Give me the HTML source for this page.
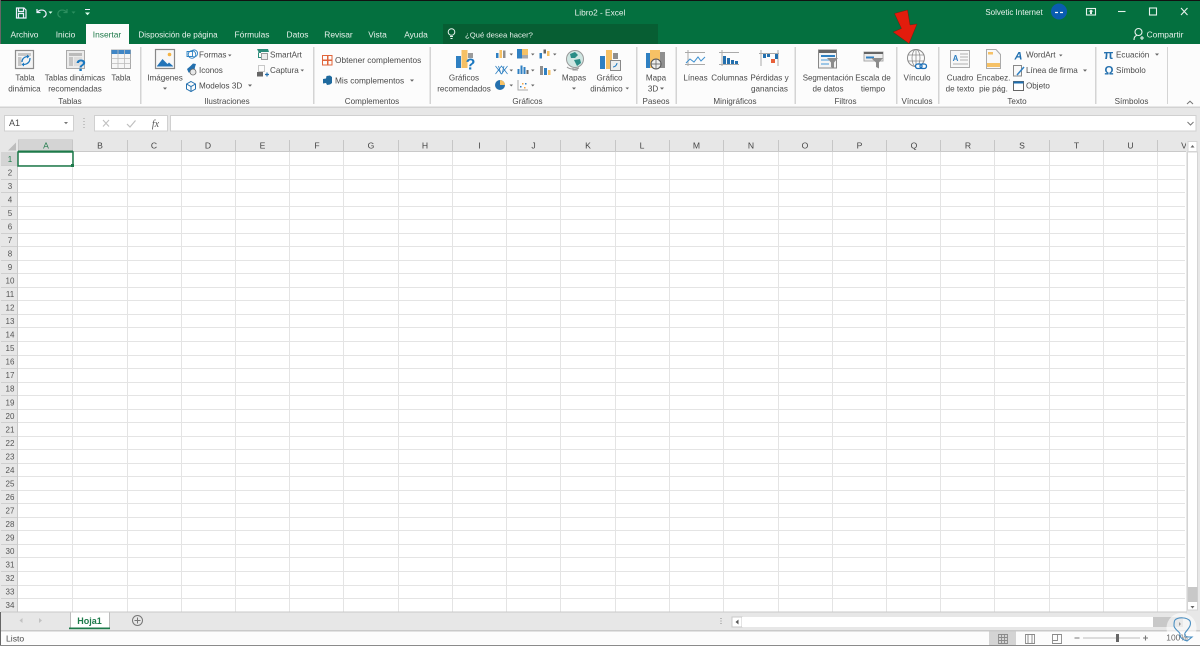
<!DOCTYPE html>
<html><head><meta charset="utf-8"><title>Libro2 - Excel</title>
<style>
html,body{margin:0;padding:0;background:#fff;width:1200px;height:646px;overflow:hidden}
svg{display:block}
text{font-family:"Liberation Sans",sans-serif;font-size:8.1px;fill:#4a4a4a;text-anchor:middle}
.l{text-anchor:start}
.w{fill:#e8f2ec}
.g{fill:#666}
.h{font-size:8.6px;fill:#444}
.r{font-size:8px;fill:#555}
</style></head><body>
<svg width="1200" height="646" viewBox="0 0 1200 646" xmlns="http://www.w3.org/2000/svg">
<!-- title bar -->
<rect width="1200" height="646" fill="#fff"/>
<rect width="1200" height="44" fill="#04703f"/>
<rect width="1200" height="1" fill="#111"/>
<rect y="0" width="1" height="646" fill="#666"/>
<rect x="443" y="24" width="215" height="20" fill="#075e33"/>
<rect x="86" y="24" width="43" height="20" fill="#fcfcfc"/>
<!-- QAT -->
<g fill="none" stroke="#eef" stroke-width="1.2">
<path d="M16.5 8h7.5l2 2v8h-9.500z"/><path d="M18.500 8v3.500h5V8M18.500 18v-4.500h5V18"/>
<path d="M37 9v3.500h3.500M37.300 12.300c2-3 7-3 8.500 0 1 2.500-.5 4.500-2.500 5"/>
<path stroke="#2c8f5f" d="M67 9v3.500h-3.500M66.700 12.300c-2-3-7-3-8.500 0-1 2.500.5 4.500 2.500 5"/>
<path stroke-width="1" d="M85 9.500h5"/>
</g>
<path d="M48.500 11.500h4l-2 2.200z" fill="#dfe"/><path d="M71.500 11.500h4l-2 2.200z" fill="#2c8f5f"/><path d="M85 12.500h5l-2.500 2.800z" fill="#dfe"/>
<text x="600" y="15.500" class="w" style="font-size:8.300px">Libro2  -  Excel</text>
<text x="1014" y="15" class="w" style="font-size:8px">Solvetic Internet</text>
<circle cx="1059" cy="11.500" r="8" fill="#0a5cb0"/>
<path d="M1055 12.500h3M1060 12.500h3" stroke="#fff" stroke-width="1.200"/>
<g fill="none" stroke="#e6f2ec" stroke-width="1.100">
<rect x="1086.500" y="8.500" width="9" height="6.500"/>
<path d="M1118 11.500h7.500"/>
<rect x="1149.500" y="8" width="7" height="7"/>
<path d="M1181 8l6.500 7M1187.500 8l-6.500 7"/>
<circle cx="1138.500" cy="32" r="3.500"/><path d="M1134 40c0-3 1.500-4.500 3-4.500M1140 38h4M1142 36v4"/>
</g>
<path d="M1088.500 11.500l2.500-2 2.500 2zM1090 11.500h2v2.500h-2z" fill="#e6f2ec"/>
<text x="1165" y="37.500" class="w" style="font-size:8.400px">Compartir</text>
<!-- tabs -->
<text x="24.500" y="37.500" class="w" style="font-size:8.400px">Archivo</text>
<text x="65.500" y="37.500" class="w" style="font-size:8.400px">Inicio</text>
<text x="107" y="37.500" style="fill:#1f7a4a;font-size:8.400px">Insertar</text>
<text x="178" y="37.500" class="w">Disposición de página</text>
<text x="252" y="37.500" class="w" style="font-size:8.400px">Fórmulas</text>
<text x="297.500" y="37.500" class="w" style="font-size:8.400px">Datos</text>
<text x="338.500" y="37.500" class="w" style="font-size:8.400px">Revisar</text>
<text x="377.500" y="37.500" class="w" style="font-size:8.400px">Vista</text>
<text x="416" y="37.500" class="w" style="font-size:8.400px">Ayuda</text>
<circle cx="451.500" cy="32" r="3.300" fill="none" stroke="#e6f2ec"/><path d="M450 36.500h3M450.500 38.500h2" stroke="#e6f2ec"/>
<text x="465" y="37.500" class="w l" style="font-size:7.700px">¿Qué desea hacer?</text>
<!-- red arrow -->
<path d="M894.500 13.500L907.500 10 910 25 917 24 909 43.500 893 32 901.500 28.500z" fill="#e21c0c" stroke="#7a1208" stroke-width=".4"/>
<!-- ribbon -->
<rect y="44" width="1200" height="63" fill="#fcfcfc"/>
<g fill="#d4d4d4">
<rect x="140" y="47" width="1.500" height="57"/><rect x="313" y="47" width="1.500" height="57"/><rect x="429.500" y="47" width="1.500" height="57"/>
<rect x="636" y="47" width="1.500" height="57"/><rect x="675.500" y="47" width="1.500" height="57"/><rect x="794.500" y="47" width="1.500" height="57"/>
<rect x="896" y="47" width="1.500" height="57"/><rect x="938" y="47" width="1.500" height="57"/><rect x="1095" y="47" width="1.500" height="57"/><rect x="1167" y="47" width="1" height="57"/>
</g>
<!-- ribbon labels -->
<text x="25" y="80.500">Tabla</text><text x="24.500" y="91.500">dinámica</text>
<text x="75" y="80.500" style="font-size:7.900px">Tablas dinámicas</text><text x="75" y="91.500">recomendadas</text>
<text x="121" y="80.500">Tabla</text>
<text x="70" y="104">Tablas</text>
<text x="165" y="80.500">Imágenes</text><path d="M163 87.500h4l-2 2.200z" fill="#666"/>
<text x="199" y="57.500" class="l">Formas</text><path d="M228 54.500h3.500l-1.700 2z" fill="#666"/>
<text x="199" y="73" class="l">Iconos</text>
<text x="199" y="88.500" class="l">Modelos 3D</text><path d="M248 84.500h4l-2 2.200z" fill="#666"/>
<text x="270" y="57.500" class="l">SmartArt</text>
<text x="270" y="73" class="l">Captura</text><path d="M300.500 69.500h3.500l-1.700 2z" fill="#666"/>
<text x="227" y="104">Ilustraciones</text>
<text x="335" y="63" class="l" style="font-size:8.300px">Obtener complementos</text>
<text x="335" y="83.500" class="l" style="font-size:8.300px">Mis complementos</text><path d="M410 79.500h4l-2 2.200z" fill="#666"/>
<text x="372" y="104">Complementos</text>
<text x="464" y="80.500">Gráficos</text><text x="464" y="91.500">recomendados</text>
<text x="527.500" y="104">Gráficos</text>
<text x="574" y="80.500">Mapas</text><path d="M572 87.500h4l-2 2.200z" fill="#666"/>
<text x="609.500" y="80.500">Gráfico</text><text x="606.500" y="91.500">dinámico</text><path d="M625.500 87.500h3.500l-1.700 2z" fill="#666"/>
<text x="656" y="80.500">Mapa</text><text x="653" y="91.500">3D</text><path d="M660 87.500h4l-2 2.200z" fill="#666"/>
<text x="656" y="104">Paseos</text>
<text x="695.500" y="80.500">Líneas</text>
<text x="729.500" y="80.500">Columnas</text>
<text x="769.500" y="80.500">Pérdidas y</text><text x="769.500" y="91.500">ganancias</text>
<text x="735" y="104">Minigráficos</text>
<text x="828" y="80.500" style="font-size:7.900px">Segmentación</text><text x="828" y="91.500">de datos</text>
<text x="873" y="80.500">Escala de</text><text x="873" y="91.500">tiempo</text>
<text x="845.500" y="104">Filtros</text>
<text x="917" y="80.500">Vínculo</text>
<text x="917" y="104">Vínculos</text>
<text x="960" y="80.500">Cuadro</text><text x="960" y="91.500">de texto</text>
<text x="993.500" y="80.500">Encabez.</text><text x="993.500" y="91.500">pie pág.</text>
<text x="1026" y="57.500" class="l">WordArt</text><path d="M1059 54.500h3.500l-1.700 2z" fill="#666"/>
<text x="1026" y="73" class="l">Línea de firma</text><path d="M1083 69.500h4l-2 2.200z" fill="#666"/>
<text x="1026" y="88.500" class="l">Objeto</text>
<text x="1017" y="104">Texto</text>
<text x="1116" y="57.500" class="l">Ecuación</text><path d="M1155 53.500h4l-2 2.200z" fill="#666"/>
<text x="1116" y="73" class="l">Símbolo</text>
<text x="1131.500" y="104">Símbolos</text>
<path d="M1187 104l3-2.800 3 2.800" fill="none" stroke="#777"/>
<!-- Tabla dinamica icon -->
<rect x="15.500" y="50.500" width="18" height="18" fill="#f4f4f4" stroke="#8c8c8c" stroke-width="1.200"/>
<rect x="18" y="53" width="13" height="3" fill="#c6c6c6"/><rect x="18" y="57" width="3.500" height="9" fill="#c6c6c6"/>
<path d="M30 58c0 4-2 6-6 6.500M22 62c0-3 2-5 5-5.500" fill="none" stroke="#1b78c0" stroke-width="1.200"/>
<path d="M24 62.500v4l-2.500-2zM27 54.500v4l2.500-2z" fill="#1b78c0"/>
<!-- Tablas recomendadas -->
<rect x="66.500" y="50.500" width="18" height="18" fill="#ececec" stroke="#aaa"/><rect x="69" y="53" width="13" height="3" fill="#bbb"/><rect x="69" y="57" width="4" height="9" fill="#c4c4c4"/><rect x="74" y="57" width="8" height="9" fill="#ddd"/>
<text x="81" y="71" style="font-size:17px;font-weight:bold;fill:#1b78c0">?</text>
<!-- Tabla icon -->
<rect x="111.500" y="50" width="19" height="18.500" fill="#f6f6f6" stroke="#aaa"/><rect x="111.500" y="50" width="19" height="4" fill="#3f86c6"/>
<path d="M111.500 58.500h19M111.500 63.500h19M118 54v14.500M124.500 54v14.500M118 50v4M124.500 50v4" stroke="#bbb" stroke-width=".8" fill="none"/>
<!-- Imagenes -->
<rect x="155.500" y="49.500" width="19" height="19" fill="#f7f7f7" stroke="#888" stroke-width="1.200"/>
<circle cx="169.500" cy="54.500" r="1.800" fill="#f5b342"/>
<path d="M157 66l5.500-7 5 5 1.500-1.500 4 3.500v.500h-16z" fill="#2374b8"/>
<!-- Formas -->
<path d="M187 51.500h5.500v5H187z M192.500 56.500a3.500 3.500 0 1 0-1-5.500" fill="none" stroke="#2f83c4" stroke-width=".9"/><circle cx="192" cy="54.500" r="3.800" fill="none" stroke="#2f83c4" stroke-width=".9"/>
<!-- Iconos -->
<path d="M187 69l3-2.500 3-3 3 .500-1 3-.500 3-3 2.500h-3z" fill="#2470ae"/><circle cx="193" cy="72" r="3" fill="#e8e8e8" stroke="#666" stroke-width=".8"/>
<!-- Modelos -->
<path d="M191 81.500l4.500 2.500v5l-4.500 2.500-4.500-2.500v-5zM186.500 84l4.500 2.500 4.500-2.500M191 86.500v5" fill="none" stroke="#2470ae" stroke-width="1"/>
<!-- SmartArt -->
<path d="M257 49h11l1 3h-8v1h-2z" fill="#2c8c7a"/><rect x="261.500" y="53.500" width="6" height="6" fill="#eee" stroke="#888" stroke-width=".8"/><path d="M258.500 52.500v5h2.500" fill="none" stroke="#2c8c7a"/>
<!-- Captura -->
<rect x="258.500" y="65.500" width="6" height="6" fill="none" stroke="#bbb" stroke-width=".8"/><rect x="257" y="72" width="6" height="4.500" fill="#666"/><path d="M265 74.500h4M267 72.500v4" stroke="#2470ae" stroke-width="1.200"/>
<!-- Obtener -->
<g fill="none" stroke="#e0653a" stroke-width="1"><rect x="322.500" y="55.500" width="5" height="4.500"/><rect x="322.500" y="60.500" width="5" height="4.500"/><rect x="328" y="60.500" width="4" height="4.500"/><rect x="328" y="55.500" width="4" height="4.500"/></g>
<!-- Mis compl -->
<path d="M323 79l3-.5.500-2.500 3.500-.500 2 1.500v6l-2 1.500-3 .500-1-2-3 .500z" fill="#1f6a9e"/>
<!-- Graficos recomendados -->
<rect x="456" y="56" width="5" height="12" fill="#2f80c2"/><rect x="461.500" y="50" width="6" height="18" fill="#f6c165"/><rect x="468" y="53" width="5" height="5" fill="#9a9a9a"/>
<text x="470.500" y="69.500" style="font-size:16px;font-weight:bold;fill:#1b78c0">?</text>
<!-- mini charts -->
<g fill="#2f80c2">
<rect x="496" y="53" width="2.500" height="5"/><rect x="503" y="50.500" width="2.500" height="7.500" fill="#8f8f8f"/><rect x="499.500" y="50" width="2.500" height="8" fill="#f6c165"/>
<rect x="517" y="49" width="5" height="9.500"/><rect x="522" y="49" width="6" height="6" fill="#f6c165"/><rect x="522" y="55" width="6" height="3.500" fill="#aaa"/>
<rect x="539.500" y="53" width="2.500" height="5.500"/><rect x="543.500" y="49.500" width="2.500" height="4" fill="#666"/><rect x="547" y="51" width="2.500" height="5" fill="#f6c165"/>
<rect x="517.500" y="69" width="2" height="5"/><rect x="520.500" y="65.500" width="2" height="8.500"/><rect x="523.500" y="67" width="2" height="7"/><rect x="526.500" y="70" width="2" height="4" fill="#666"/>
<rect x="540" y="66" width="3" height="9" fill="#8f8f8f"/><rect x="544" y="68" width="3" height="7"/><rect x="548" y="70" width="2.500" height="5" fill="#f6c165"/>
</g>
<path d="M495.500 66l6 8 6-8M495.500 74l6-8 6 8M498.500 66l2.500 8M504 66l-2 8" fill="none" stroke="#2f80c2" stroke-width=".8"/>
<circle cx="500" cy="85" r="5" fill="#2470ae"/><path d="M500 85v-5a5 5 0 0 1 5 5z" fill="#f6c165"/>
<path d="M518 80v10h10" fill="none" stroke="#aaa"/><g fill="#2f80c2"><rect x="520" y="86" width="1.500" height="1.500"/><rect x="525" y="83" width="1.500" height="1.500"/></g><g fill="#f6a542"><rect x="522" y="83" width="1.500" height="1.500"/><rect x="524" y="87" width="1.500" height="1.500"/></g>
<g fill="#666"><path d="M509.500 53.500h3.500l-1.700 2zM509.500 69.500h3.500l-1.700 2zM509.500 84.500h3.500l-1.700 2zM531 53.500h3.500l-1.700 2zM531 69.500h3.500l-1.700 2zM531 84.500h3.500l-1.700 2zM553 53.500h3.500l-1.700 2zM553 69.500h3.500l-1.700 2z"/></g>
<!-- globe Mapas -->
<circle cx="575" cy="59" r="8.500" fill="#cfe6e2" stroke="#999"/><path d="M570 54l5-2 3 3-3 3-4 0zM574 60l6-1 1 4-4 3z" fill="#2a8d86"/><path d="M567 67c2 2 8 3 12 1M573 68v2h5" fill="none" stroke="#999"/>
<!-- Grafico dinamico -->
<rect x="600" y="56" width="5" height="13" fill="#2f80c2"/><rect x="606" y="50" width="6" height="19" fill="#f6c165"/><rect x="613" y="53" width="5" height="6" fill="#8f8f8f"/>
<rect x="610.500" y="60.500" width="10" height="10" fill="#eee" stroke="#888"/><path d="M613 67c2 0 4-2 4-4" fill="none" stroke="#1b78c0"/>
<!-- Mapa 3D -->
<rect x="646" y="53" width="4" height="15" fill="#2f80c2"/><rect x="650" y="50" width="5" height="18" fill="#f6c165"/><rect x="655" y="50" width="5" height="18" fill="#f6c165"/><rect x="660" y="52" width="5" height="16" fill="#8f8f8f"/>
<circle cx="656" cy="64" r="5" fill="#eee" stroke="#555"/><path d="M651 64h10M656 59v10" stroke="#555" stroke-width=".7"/>
<!-- Lineas -->
<path d="M688 50v16M685 52.500h20M685 64.500h20" stroke="#aaa" fill="none"/><path d="M686 63l4-4 4 3 4-5 3 4 4-4" fill="none" stroke="#3b8fd0" stroke-width="1"/>
<!-- Columnas -->
<path d="M722 50v16M719 52.500h20M719 64.500h20" stroke="#aaa" fill="none"/><g fill="#2470ae"><rect x="723" y="56" width="3" height="8"/><rect x="727" y="58" width="3" height="6"/><rect x="731" y="60" width="3" height="4"/><rect x="735" y="61" width="3" height="3"/></g>
<!-- Perdidas -->
<path d="M761 50v16M759 53.500h20M778 50v16" stroke="#aaa" fill="none"/><g fill="#2470ae"><rect x="763" y="54" width="3" height="4"/><rect x="767" y="54" width="3" height="3"/><rect x="775" y="54" width="3" height="5"/></g><g fill="#e8603a"><rect x="771" y="59" width="2" height="4"/><rect x="773" y="59" width="2" height="4"/></g>
<!-- Segmentacion -->
<rect x="818.500" y="50" width="18" height="18" fill="#f4f4f4" stroke="#888"/><rect x="819" y="50" width="17" height="3" fill="#666"/><rect x="821" y="55" width="14" height="2" fill="#2f80c2"/><rect x="821" y="59" width="8" height="2" fill="#9cc6e6"/><rect x="821" y="63" width="8" height="2" fill="#9cc6e6"/><path d="M827 58h11l-4 4.500v6l-3-1.500v-4.500z" fill="#8c8c8c"/>
<!-- Escala -->
<rect x="864" y="52" width="19" height="9" fill="#ececec" stroke="#aaa"/><rect x="864" y="52" width="19" height="2" fill="#666"/><rect x="866" y="56.500" width="8" height="2" fill="#2f80c2"/><path d="M871 58h12l-4 4.500v6l-3-1.500v-4.500z" fill="#8c8c8c"/>
<!-- Vinculo -->
<circle cx="916" cy="58" r="8.500" fill="none" stroke="#8a8a8a"/><ellipse cx="916" cy="58" rx="4" ry="8.500" fill="none" stroke="#8a8a8a" stroke-width=".8"/><path d="M908 55h16M908 61h16M916 49.500v17" stroke="#8a8a8a" stroke-width=".8"/>
<rect x="915.500" y="64" width="6.500" height="4.500" rx="2.200" fill="#fcfcfc" stroke="#1b6fb8" stroke-width="1.300"/><rect x="920" y="64" width="6.500" height="4.500" rx="2.200" fill="none" stroke="#1b6fb8" stroke-width="1.300"/>
<!-- Cuadro -->
<rect x="950.500" y="50.500" width="19" height="17" fill="#f8f8f8" stroke="#aaa"/><text x="955.500" y="61" style="font-size:8px;fill:#2f80c2;font-weight:bold">A</text><path d="M960 54h8M960 57h8M960 60h8M953 64h15" stroke="#999" stroke-width=".8"/>
<!-- Encabez -->
<path d="M986.500 49.500h9.500l4.500 5v14h-14z" fill="#f8f8f8" stroke="#aaa"/><rect x="988" y="52" width="5" height="2.500" fill="#f6c165"/><rect x="987" y="63" width="13" height="4" fill="#f6c165"/>
<!-- WordArt -->
<text x="1018.500" y="59.500" style="font-size:11px;fill:#1f6fb0;font-style:italic;font-weight:bold">A</text>
<!-- Linea firma -->
<rect x="1013.500" y="65.500" width="8" height="10.500" fill="#f8f8f8" stroke="#888"/><path d="M1017 75l7-8" stroke="#2f80c2" stroke-width="1.500"/>
<!-- Objeto -->
<rect x="1013.500" y="81.500" width="10" height="9" fill="#fff" stroke="#666"/><rect x="1013.500" y="81.500" width="10" height="2" fill="#1f6fb0"/>
<!-- Ecuacion -->
<text x="1108.500" y="59" style="font-size:12.500px;fill:#2470ae;font-weight:bold">π</text>
<text x="1109" y="74.500" style="font-size:11.500px;fill:#2470ae;font-weight:bold">Ω</text>

<!-- formula bar band -->
<rect y="107" width="1200" height="45" fill="#e7e7e7"/>
<rect y="106.500" width="1200" height="1.500" fill="#d2d2d2"/>
<rect x="4.500" y="115.500" width="69" height="15.500" fill="#fff" stroke="#d0d0d0"/>
<text x="9" y="126" class="l" style="font-size:9px">A1</text>
<path d="M64 122h4l-2 2.200z" fill="#777"/>
<path d="M84 118v1M84 121v1M84 124v1M84 127v1" stroke="#aaa" stroke-width="1.200"/>
<rect x="94.500" y="115.500" width="73" height="15.500" fill="#fff" stroke="#d0d0d0"/>
<path d="M103 120l6 6.500M109 120l-6 6.500" stroke="#c0c0c0" stroke-width="1.100"/>
<path d="M127 124l3 3 5.500-6.500" stroke="#c0c0c0" stroke-width="1.200" fill="none"/>
<text x="155.500" y="127" style="font-family:'Liberation Serif',serif;font-style:italic;font-size:10px;fill:#555">fx</text>
<rect x="170.500" y="115.500" width="1025.500" height="15.500" fill="#fff" stroke="#d0d0d0"/>
<path d="M1187.500 122l3 3 3-3" fill="none" stroke="#777"/>

<!-- sheet -->
<rect x="18" y="152" width="1168" height="460" fill="#fff"/>
<path stroke="#e4e4e4" stroke-width="1" fill="none" d="M18 165.500H1185M18 179.500H1185M18 192.500H1185M18 206.500H1185M18 219.500H1185M18 233.500H1185M18 246.500H1185M18 260.500H1185M18 273.500H1185M18 287.500H1185M18 300.500H1185M18 314.500H1185M18 327.500H1185M18 341.500H1185M18 355.500H1185M18 368.500H1185M18 382.500H1185M18 395.500H1185M18 409.500H1185M18 422.500H1185M18 436.500H1185M18 449.500H1185M18 463.500H1185M18 476.500H1185M18 490.500H1185M18 503.500H1185M18 517.500H1185M18 530.500H1185M18 544.500H1185M18 557.500H1185M18 571.500H1185M18 585.500H1185M18 598.500H1185
M72.500 152V612M127.500 152V612M181.500 152V612M235.500 152V612M289.500 152V612M343.500 152V612M398.500 152V612M452.500 152V612M506.500 152V612M560.500 152V612M615.500 152V612M669.500 152V612M723.500 152V612M778.500 152V612M832.500 152V612M886.500 152V612M940.500 152V612M994.500 152V612M1049.500 152V612M1103.500 152V612M1157.500 152V612"/>
<!-- column headers -->
<rect x="18" y="139" width="55" height="13" fill="#d4d4d4"/>
<path d="M8 150.500h8v-8z" fill="#bdbdbd"/>
<path stroke="#c6c6c6" d="M18.500 140V152M72.500 140V152M127.500 140V152M181.500 140V152M235.500 140V152M289.500 140V152M343.500 140V152M398.500 140V152M452.500 140V152M506.500 140V152M560.500 140V152M615.500 140V152M669.500 140V152M723.500 140V152M778.500 140V152M832.500 140V152M886.500 140V152M940.500 140V152M994.500 140V152M1049.500 140V152M1103.500 140V152M1157.500 140V152"/>
<rect x="18" y="151" width="1168" height="1" fill="#c9c9c9"/>
<rect x="18" y="150.500" width="55" height="1.500" fill="#1f7a4a"/>
<g class="h"><text class="h" x="46" y="148.500" style="fill:#1f7a4a">A</text><text class="h" x="100" y="148.500">B</text><text class="h" x="154" y="148.500">C</text><text class="h" x="208" y="148.500">D</text><text class="h" x="262.500" y="148.500">E</text><text class="h" x="317" y="148.500">F</text><text class="h" x="371" y="148.500">G</text><text class="h" x="425" y="148.500">H</text><text class="h" x="479.500" y="148.500">I</text><text class="h" x="533.500" y="148.500">J</text><text class="h" x="588" y="148.500">K</text><text class="h" x="642" y="148.500">L</text><text class="h" x="696.500" y="148.500">M</text><text class="h" x="751" y="148.500">N</text><text class="h" x="805" y="148.500">O</text><text class="h" x="859.500" y="148.500">P</text><text class="h" x="914" y="148.500">Q</text><text class="h" x="968" y="148.500">R</text><text class="h" x="1022" y="148.500">S</text><text class="h" x="1076.500" y="148.500">T</text><text class="h" x="1130.500" y="148.500">U</text><text class="h" x="1184" y="148.500">V</text></g>
<!-- row headers -->
<rect x="0" y="152" width="18" height="460" fill="#e7e7e7"/>
<rect x="1" y="152" width="17" height="14" fill="#d4d4d4"/>
<path stroke="#cfcfcf" d="M1 165.500H18M1 179.500H18M1 192.500H18M1 206.500H18M1 219.500H18M1 233.500H18M1 246.500H18M1 260.500H18M1 273.500H18M1 287.500H18M1 300.500H18M1 314.500H18M1 327.500H18M1 341.500H18M1 355.500H18M1 368.500H18M1 382.500H18M1 395.500H18M1 409.500H18M1 422.500H18M1 436.500H18M1 449.500H18M1 463.500H18M1 476.500H18M1 490.500H18M1 503.500H18M1 517.500H18M1 530.500H18M1 544.500H18M1 557.500H18M1 571.500H18M1 585.500H18M1 598.500H18"/>
<rect x="17" y="152" width="1" height="460" fill="#c9c9c9"/>
<text class="r" x="10" y="161.800" style="fill:#1f7a4a">1</text><text class="r" x="10" y="175.300">2</text><text class="r" x="10" y="188.800">3</text><text class="r" x="10" y="202.300">4</text><text class="r" x="10" y="215.900">5</text><text class="r" x="10" y="229.400">6</text><text class="r" x="10" y="242.900">7</text><text class="r" x="10" y="256.400">8</text><text class="r" x="10" y="270">9</text><text class="r" x="10" y="283.500">10</text><text class="r" x="10" y="297">11</text><text class="r" x="10" y="310.600">12</text><text class="r" x="10" y="324.100">13</text><text class="r" x="10" y="337.600">14</text><text class="r" x="10" y="351.200">15</text><text class="r" x="10" y="364.700">16</text><text class="r" x="10" y="378.200">17</text><text class="r" x="10" y="391.700">18</text><text class="r" x="10" y="405.300">19</text><text class="r" x="10" y="418.800">20</text><text class="r" x="10" y="432.300">21</text><text class="r" x="10" y="445.900">22</text><text class="r" x="10" y="459.400">23</text><text class="r" x="10" y="472.900">24</text><text class="r" x="10" y="486.500">25</text><text class="r" x="10" y="500">26</text><text class="r" x="10" y="513.500">27</text><text class="r" x="10" y="527">28</text><text class="r" x="10" y="540.600">29</text><text class="r" x="10" y="554.100">30</text><text class="r" x="10" y="567.600">31</text><text class="r" x="10" y="581.200">32</text><text class="r" x="10" y="594.700">33</text><text class="r" x="10" y="608.200">34</text>
<!-- selection -->
<rect x="18" y="152" width="55" height="14" fill="none" stroke="#1d7a4a" stroke-width="1.500"/>
<rect x="71" y="164" width="3" height="3" fill="#1d7a4a"/>
<!-- v scrollbar -->
<rect x="1186" y="140" width="14" height="472" fill="#e7e7e7"/>
<rect x="1187.500" y="152" width="10" height="458" fill="#fff" stroke="#d4d4d4"/>
<rect x="1188" y="141.500" width="9" height="10" fill="#fff" stroke="#d4d4d4"/>
<path d="M1190.500 147.500h4l-2-2.500z" fill="#666"/>
<rect x="1188" y="587" width="9.500" height="15" fill="#c8c8c8"/>
<path d="M1190.500 606h4l-2 2.500z" fill="#666"/>
<!-- sheet tabs -->
<rect x="1" y="612" width="1199" height="19" fill="#e7e7e7"/>
<rect x="1" y="611.500" width="1186" height="1" fill="#c9c9c9"/>
<path d="M22.500 618v5l-3-2.500zM39 618v5l3-2.500z" fill="#c2c2c2"/>
<path d="M70.500 612.500V628.500H109.500V612.500" fill="#fff" stroke="#bdbdbd"/>
<rect x="69" y="627.500" width="41" height="1.700" fill="#1d7a4a"/>
<text x="89.500" y="624" style="font-weight:bold;font-size:9px;fill:#1d7a4a">Hoja1</text>
<circle cx="137.500" cy="620.500" r="5" fill="none" stroke="#777"/><path d="M134.500 620.500h6M137.500 617.500v6" stroke="#777"/>
<path d="M721 618v1M721 620.500v1M721 623v1" stroke="#aaa" stroke-width="1.500"/>
<rect x="732" y="617" width="10" height="10" fill="#fff" stroke="#c8c8c8"/>
<path d="M738.500 619.500v5l-3-2.500z" fill="#555"/>
<rect x="742" y="617" width="411" height="10" fill="#fff"/>
<rect x="1153" y="617" width="30" height="10" fill="#c8c8c8"/>
<!-- status bar -->
<rect x="1" y="630" width="1199" height="1.500" fill="#c9c9c9"/>
<rect x="1" y="631.500" width="1199" height="13" fill="#fcfcfc"/>
<rect y="645" width="1200" height="1" fill="#8a8a8a"/>
<text x="6" y="641.500" class="l" style="font-size:8.600px">Listo</text>
<rect x="989" y="631.500" width="27" height="13.500" fill="#d4d4d4"/>
<g fill="none" stroke="#8a8a8a" stroke-width=".9">
<path d="M998.500 634.500h9v9h-9zM1001.500 634.500v9M1004.500 634.500v9M998.500 637.500h9M998.500 640.500h9"/>
<path d="M1025.500 634.500h9v9h-9zM1028 634.500v9M1032 634.500v9"/>
<path d="M1052.500 634.500h9v9h-9zM1052.500 640.500h5v-6"/>
</g>
<path d="M1074.500 638h5M1143 638h5M1145.500 635.500v5" stroke="#777" stroke-width="1.100"/>
<rect x="1083" y="637.500" width="57" height="1" fill="#bdbdbd"/>
<rect x="1116" y="634" width="3" height="8" fill="#666"/>
<!-- watermark -->
<circle cx="1181.500" cy="628" r="15" fill="#fff" fill-opacity=".6"/>
<text x="1177" y="640.500" class="g" style="font-size:8.400px">100%</text>
<path d="M1175 620C1178 617 1187 617 1190 621C1192 626 1187 630 1185 633C1184 636 1186 637 1189 637L1192 637L1187 641C1183 640 1179 637 1180 634C1180 632 1175 630 1174 626C1174 623 1174 621 1175 620z" fill="none" stroke="#4a8fc2" stroke-width="1.100"/>
<path d="M1179 622v4l2-2z" fill="#999"/>
</svg>
</body></html>
